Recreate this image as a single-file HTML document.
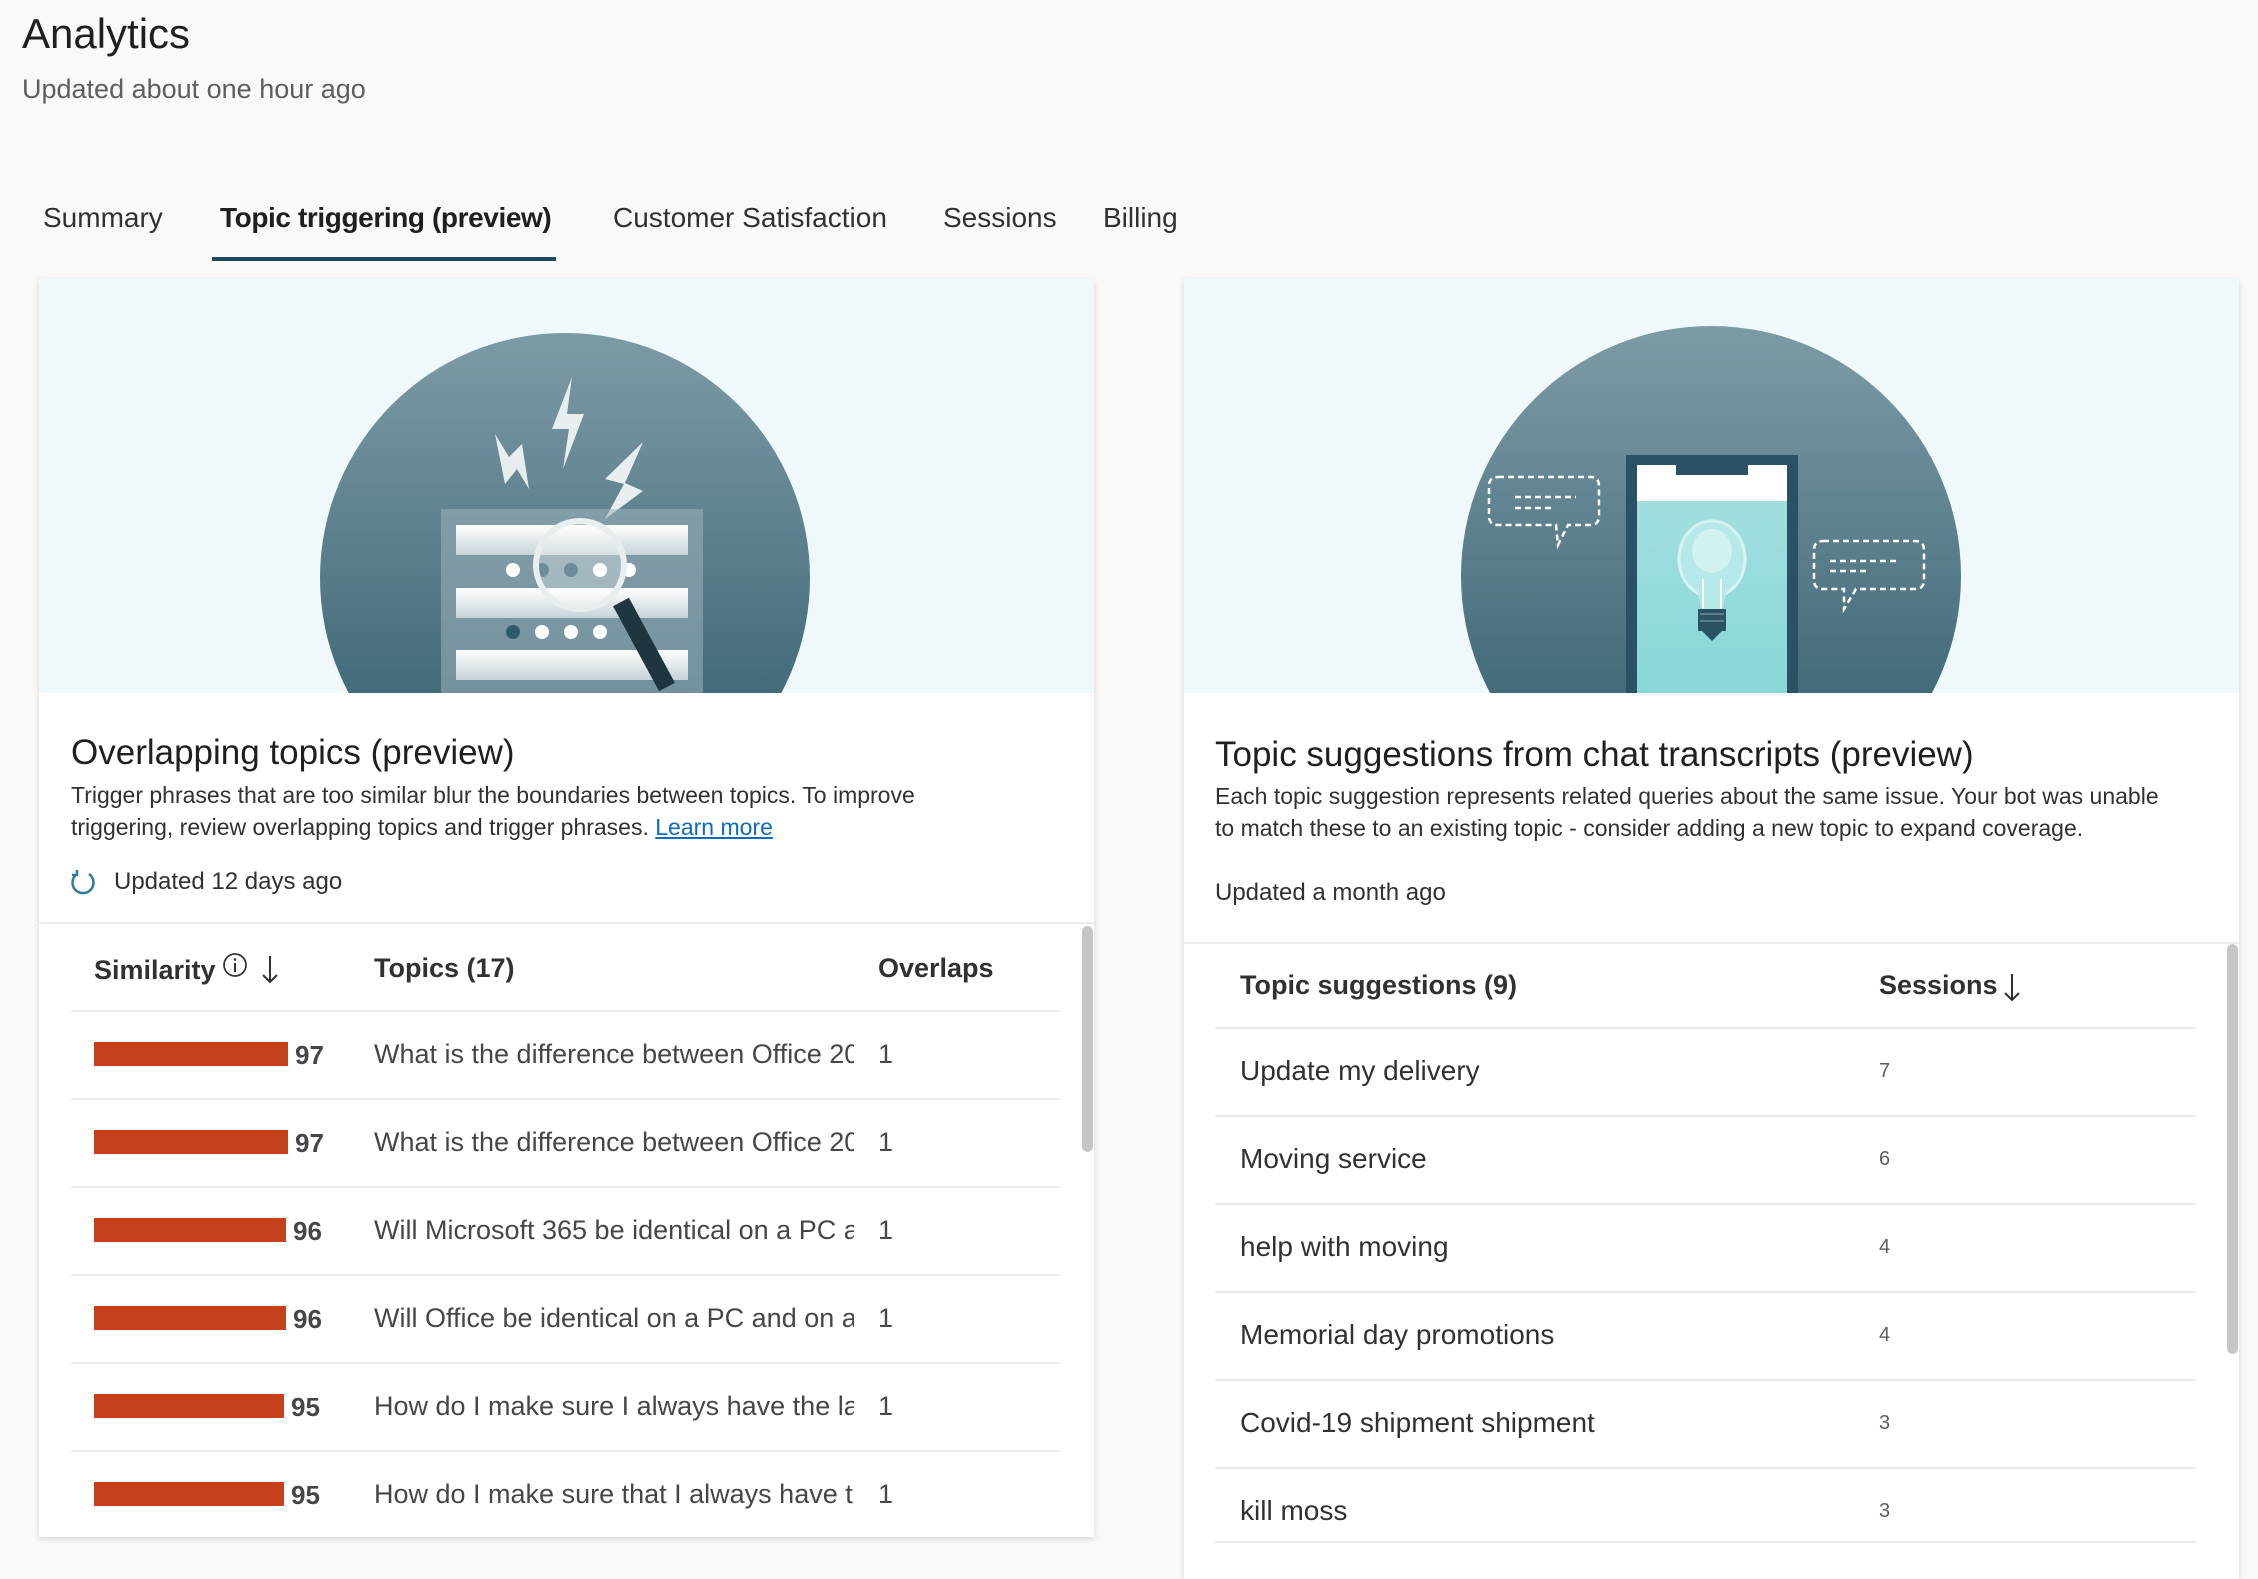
<!DOCTYPE html>
<html><head><meta charset="utf-8"><style>
*{margin:0;padding:0;box-sizing:border-box}
body{width:2258px;height:1566px;background:#faf9f8;font-family:"Liberation Sans",sans-serif;color:#323130;position:relative;overflow:hidden}
.a{position:absolute;white-space:nowrap}
.card{position:absolute;background:#fff;box-shadow:0 2px 6px rgba(0,0,0,.15);overflow:hidden}
.hero{position:absolute;left:0;top:0;right:0;height:414px;background:#eff8fb;overflow:hidden}
.line{position:absolute;height:2px;background:#edebe9}
.bar{position:absolute;height:24px;background:#c3421c}
.num{position:absolute;font-size:26px;font-weight:bold;color:#484644}
.tt{position:absolute;font-size:27px;color:#484644;white-space:nowrap;overflow:hidden}
.rt{position:absolute;font-size:28px;color:#323130}
.rn{position:absolute;font-size:20px;color:#605e5c}
</style></head><body>
<div class="a" style="left:22px;top:10px;font-size:42px;color:#201f1e">Analytics</div>
<div class="a" style="left:22px;top:74px;font-size:27px;color:#605e5c">Updated about one hour ago</div>
<div class="a" style="left:43px;top:202px;font-size:28px;color:#323130">Summary</div>
<div class="a" style="left:220px;top:202px;font-size:28px;color:#201f1e;font-weight:600;letter-spacing:-0.4px">Topic triggering (preview)</div>
<div class="a" style="left:613px;top:202px;font-size:28px">Customer Satisfaction</div>
<div class="a" style="left:943px;top:202px;font-size:28px">Sessions</div>
<div class="a" style="left:1103px;top:202px;font-size:28px">Billing</div>
<div class="a" style="left:212px;top:257px;width:344px;height:4px;background:#1d4a5e"></div>

<!-- Left card -->
<div class="card" style="left:39px;top:279px;width:1055px;height:1258px">
 <div class="hero">
  <svg width="1055" height="414">
   <defs><linearGradient id="g1" x1="0" y1="0" x2="0" y2="1"><stop offset="0" stop-color="#7d9ba5"/><stop offset="1" stop-color="#2f5a6c"/></linearGradient>
   <linearGradient id="g2" x1="0" y1="0" x2="0" y2="1"><stop offset="0" stop-color="#fff"/><stop offset="1" stop-color="#c7d3d8"/></linearGradient></defs>
   <circle cx="526" cy="299" r="245" fill="url(#g1)"/>
   <path d="M533 98 L513 150 L530 150 L524 190 L545 135 L528 135 Z" fill="#e8eef0"/>
   <path d="M456 155 L466 205 L478 190 L490 210 L483 165 L470 178 Z" fill="#e8eef0"/>
   <path d="M604 163 L566 200 L585 205 L566 240 L604 212 L586 204 Z" fill="#e8eef0"/>
   <rect x="402" y="230" width="262" height="190" fill="#9db3bc" opacity=".55"/>
   <rect x="417" y="246" width="232" height="30" fill="url(#g2)"/>
   <rect x="417" y="309" width="232" height="30" fill="url(#g2)"/>
   <rect x="417" y="371" width="232" height="30" fill="url(#g2)"/>
   <g fill="#fff"><circle cx="474" cy="291" r="7"/><circle cx="503" cy="291" r="7" fill="#2f5a6c"/><circle cx="532" cy="291" r="7" fill="#2f5a6c"/><circle cx="561" cy="291" r="7"/><circle cx="590" cy="291" r="7"/>
   <circle cx="474" cy="353" r="7" fill="#2f5a6c"/><circle cx="503" cy="353" r="7"/><circle cx="532" cy="353" r="7"/><circle cx="561" cy="353" r="7"/></g>
   <line x1="582" y1="323" x2="628" y2="408" stroke="#1f3640" stroke-width="18"/>
   <circle cx="541" cy="286" r="44" fill="rgba(255,255,255,.3)" stroke="#e8eef0" stroke-width="6"/>
  </svg>
 </div>
 <div class="a" style="left:32px;top:454px;font-size:35px;color:#201f1e">Overlapping topics (preview)</div>
 <div class="a" style="left:32px;top:500px;font-size:23px;line-height:32px;color:#323130">Trigger phrases that are too similar blur the boundaries between topics. To improve<br>triggering, review overlapping topics and trigger phrases. <span style="color:#0f6cbd;text-decoration:underline">Learn more</span></div>
 <svg class="a" style="left:30px;top:590px" width="28" height="28"><path d="M20 5 A10.5 10.5 0 1 1 8 5" fill="none" stroke="#2f7a99" stroke-width="2.5"/><path d="M8 1 L8 6 L3 6" fill="none" stroke="#2f7a99" stroke-width="2.5"/></svg>
 <div class="a" style="left:75px;top:589px;font-size:24px">Updated 12 days ago</div>
 <div class="line" style="left:0;right:0;top:643px"></div>
 <div class="a" style="left:55px;top:676px;font-size:27px;font-weight:600;color:#323130">Similarity</div>
 <svg class="a" style="left:182px;top:673px" width="60" height="36"><circle cx="14" cy="13" r="11" fill="none" stroke="#323130" stroke-width="1.7"/><rect x="13" y="11" width="2" height="9" fill="#323130"/><circle cx="14" cy="7.5" r="1.3" fill="#323130"/><path d="M49 4 V30 M42 23 L49 30 L56 23" fill="none" stroke="#323130" stroke-width="2"/></svg>
 <div class="a" style="left:335px;top:674px;font-size:27px;font-weight:600">Topics (17)</div>
 <div class="a" style="left:839px;top:674px;font-size:27px;font-weight:600">Overlaps</div>
 <div class="line" style="left:32px;width:990px;top:731px"></div>

 <div class="bar" style="left:55px;top:763px;width:194px"></div><div class="num" style="left:256px;top:761px">97</div><div class="tt" style="left:335px;top:760px;width:480px">What is the difference between Office 2019</div><div class="tt" style="left:839px;top:760px">1</div>
 <div class="line" style="left:32px;width:990px;top:819px"></div>
 <div class="bar" style="left:55px;top:851px;width:194px"></div><div class="num" style="left:256px;top:849px">97</div><div class="tt" style="left:335px;top:848px;width:480px">What is the difference between Office 2019</div><div class="tt" style="left:839px;top:848px">1</div>
 <div class="line" style="left:32px;width:990px;top:907px"></div>
 <div class="bar" style="left:55px;top:939px;width:192px"></div><div class="num" style="left:254px;top:937px">96</div><div class="tt" style="left:335px;top:936px;width:480px">Will Microsoft 365 be identical on a PC and</div><div class="tt" style="left:839px;top:936px">1</div>
 <div class="line" style="left:32px;width:990px;top:995px"></div>
 <div class="bar" style="left:55px;top:1027px;width:192px"></div><div class="num" style="left:254px;top:1025px">96</div><div class="tt" style="left:335px;top:1024px;width:480px">Will Office be identical on a PC and on a Mac</div><div class="tt" style="left:839px;top:1024px">1</div>
 <div class="line" style="left:32px;width:990px;top:1083px"></div>
 <div class="bar" style="left:55px;top:1115px;width:190px"></div><div class="num" style="left:252px;top:1113px">95</div><div class="tt" style="left:335px;top:1112px;width:480px">How do I make sure I always have the latest</div><div class="tt" style="left:839px;top:1112px">1</div>
 <div class="line" style="left:32px;width:990px;top:1171px"></div>
 <div class="bar" style="left:55px;top:1203px;width:190px"></div><div class="num" style="left:252px;top:1201px">95</div><div class="tt" style="left:335px;top:1200px;width:480px">How do I make sure that I always have the</div><div class="tt" style="left:839px;top:1200px">1</div>
 <div class="a" style="left:1043px;top:647px;width:11px;height:226px;background:#c8c6c4;border-radius:6px"></div>
</div>

<!-- Right card -->
<div class="card" style="left:1184px;top:279px;width:1055px;height:1300px">
 <div class="hero">
  <svg width="1055" height="414">
   <defs><linearGradient id="g3" x1="0" y1="0" x2="0" y2="1"><stop offset="0" stop-color="#7d9ba5"/><stop offset="1" stop-color="#2f5a6c"/></linearGradient>
   <linearGradient id="g4" x1="0" y1="0" x2="0" y2="1"><stop offset="0" stop-color="#a6e0e0"/><stop offset="1" stop-color="#85d6d8"/></linearGradient></defs>
   <circle cx="527" cy="297" r="250" fill="url(#g3)"/>
   <rect x="442" y="176" width="172" height="260" fill="#2a5264"/>
   <rect x="453" y="186" width="150" height="250" fill="url(#g4)"/>
   <rect x="453" y="186" width="150" height="36" fill="#fff"/>
   <rect x="492" y="186" width="72" height="10" fill="#2a5264"/>
   <ellipse cx="528" cy="280" rx="33" ry="38" fill="#b5e8e8" stroke="#d6f3f3" stroke-width="3"/>
   <ellipse cx="528" cy="272" rx="20" ry="22" fill="#d2f2f2"/>
   <path d="M512 308 L518 330 H538 L544 308" fill="#b5e8e8"/>
   <path d="M519 300 V330 M537 300 V330" stroke="#fff" stroke-width="2"/>
   <rect x="514" y="330" width="28" height="22" fill="#2a5264"/>
   <path d="M516 335 H540 M516 342 H540" stroke="#6c8c98" stroke-width="1.5"/>
   <path d="M518 352 L528 362 L538 352 Z" fill="#2a5264"/>
   <g fill="none" stroke="#fff" stroke-width="2.5" stroke-dasharray="6 4">
    <path d="M314 198 H406 Q415 198 415 207 V237 Q415 246 406 246 H384 L374 266 L372 246 H314 Q305 246 305 237 V207 Q305 198 314 198 Z"/>
    <path d="M331 218 H392 M331 229 H368"/>
    <path d="M639 262 H731 Q740 262 740 271 V301 Q740 310 731 310 H672 L660 330 L660 310 H639 Q630 310 630 301 V271 Q630 262 639 262 Z"/>
    <path d="M646 282 H714 M646 292 H686"/>
   </g>
  </svg>
 </div>
 <div class="a" style="left:31px;top:456px;font-size:35px;color:#201f1e">Topic suggestions from chat transcripts (preview)</div>
 <div class="a" style="left:31px;top:501px;font-size:23px;line-height:32px;color:#323130">Each topic suggestion represents related queries about the same issue. Your bot was unable<br>to match these to an existing topic - consider adding a new topic to expand coverage.</div>
 <div class="a" style="left:31px;top:600px;font-size:24px">Updated a month ago</div>
 <div class="line" style="left:0;right:0;top:663px"></div>
 <div class="a" style="left:56px;top:691px;font-size:27px;font-weight:600">Topic suggestions (9)</div>
 <div class="a" style="left:695px;top:691px;font-size:27px;font-weight:600">Sessions</div>
 <svg class="a" style="left:818px;top:691px" width="20" height="34"><path d="M10 4 V30 M3 23 L10 30 L17 23" fill="none" stroke="#323130" stroke-width="2"/></svg>
 <div class="line" style="left:31px;width:981px;top:748px"></div>
 <div class="rt" style="left:56px;top:776px">Update my delivery</div><div class="rn" style="left:695px;top:781px">7</div>
 <div class="line" style="left:31px;width:981px;top:836px"></div>
 <div class="rt" style="left:56px;top:864px">Moving service</div><div class="rn" style="left:695px;top:869px">6</div>
 <div class="line" style="left:31px;width:981px;top:924px"></div>
 <div class="rt" style="left:56px;top:952px">help with moving</div><div class="rn" style="left:695px;top:957px">4</div>
 <div class="line" style="left:31px;width:981px;top:1012px"></div>
 <div class="rt" style="left:56px;top:1040px">Memorial day promotions</div><div class="rn" style="left:695px;top:1045px">4</div>
 <div class="line" style="left:31px;width:981px;top:1100px"></div>
 <div class="rt" style="left:56px;top:1128px">Covid-19 shipment shipment</div><div class="rn" style="left:695px;top:1133px">3</div>
 <div class="line" style="left:31px;width:981px;top:1188px"></div>
 <div class="rt" style="left:56px;top:1216px">kill moss</div><div class="rn" style="left:695px;top:1221px">3</div>
 <div class="line" style="left:31px;width:981px;top:1262px"></div>
 <div class="a" style="left:1043px;top:665px;width:11px;height:410px;background:#c8c6c4;border-radius:6px"></div>
</div>
</body></html>
